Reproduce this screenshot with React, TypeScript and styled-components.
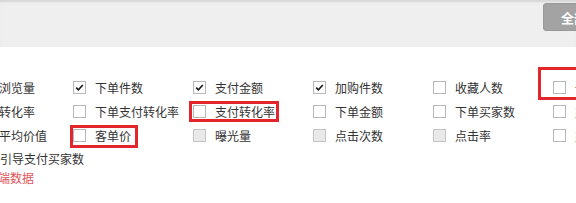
import { Fragment } from 'react';
import styled, { createGlobalStyle, css } from 'styled-components';

const GlobalStyle = createGlobalStyle`
  html, body {
    margin: 0;
    padding: 0;
    background: #fff;
    overflow: hidden;
  }
  body {
    font-family: "Noto Sans CJK SC", "Noto Sans", sans-serif;
    font-size: 12px;
    color: #333;
  }
`;

const Page = styled.div`
  width: 576px;
  height: 203px;
  overflow: hidden;
`;

const TopBar = styled.div`
  height: 47px;
  background: #efefef;
  box-shadow: inset 0 3px 2px -1px #d6d6d6;
  display: flex;
  justify-content: flex-end;
  align-items: flex-start;
`;

const AllButton = styled.button`
  margin: 3px -40px 0 0;
  width: 73px;
  height: 28px;
  padding: 0 0 0 17px;
  border: 1px solid #999;
  border-radius: 3px;
  background: #a3a3a3;
  color: #fff;
  font-family: "Noto Sans CJK SC", sans-serif;
  font-size: 13px;
  font-weight: bold;
  text-align: left;
`;

const Grid = styled.div`
  padding-top: 28px;
  display: grid;
  grid-template-columns: 73px repeat(5, 120px);
  grid-auto-rows: 24px;
`;

const RowLabel = styled.div`
  display: flex;
  align-items: center;
  margin-left: -1px;
  white-space: nowrap;
`;

type Mark = { t: number; r: number; b: number; l: number };

const Item = styled.label<{ $mark?: Mark }>`
  position: relative;
  justify-self: start;
  display: inline-flex;
  align-items: center;
  height: 24px;
  white-space: nowrap;
  ${(p) =>
    p.$mark &&
    css`
      &::after {
        content: '';
        position: absolute;
        top: ${p.$mark.t}px;
        right: ${p.$mark.r}px;
        bottom: ${p.$mark.b}px;
        left: ${p.$mark.l}px;
        border: 3px solid #e2262c;
        pointer-events: none;
      }
    `}
`;

const Box = styled.span<{ $disabled?: boolean }>`
  box-sizing: border-box;
  width: 13px;
  height: 13px;
  margin-right: 9px;
  border: 1px solid ${(p) => (p.$disabled ? '#c4c4c4' : '#b8b8b8')};
  background: ${(p) => (p.$disabled ? '#e9e9e9' : '#fff')};
  display: flex;
  align-items: center;
  justify-content: center;
  flex-shrink: 0;
`;

const Footer = styled.div`
  display: flex;
  flex-direction: column;
`;

const FootLine = styled.div`
  height: 24px;
  line-height: 24px;
  white-space: nowrap;
`;

const RedLink = styled.div`
  margin-left: -2px;
  line-height: 14px;
  color: #e25458;
`;

const Check = () => (
  <svg width="11" height="11" viewBox="0 0 11 11">
    <path d="M2.2 5.6 L4.4 7.8 L8.8 3" fill="none" stroke="#1a1a1a" strokeWidth="1.6" />
  </svg>
);

interface Cell {
  text: string;
  checked?: boolean;
  disabled?: boolean;
  mark?: Mark;
}

const rows: { label: string; cells: Cell[] }[] = [
  {
    label: '浏览量',
    cells: [
      { text: '下单件数', checked: true },
      { text: '支付金额', checked: true },
      { text: '加购件数', checked: true },
      { text: '收藏人数' },
      { text: '一级访客', mark: { t: -8, r: -60, b: -1, l: -15 } },
    ],
  },
  {
    label: '转化率',
    cells: [
      { text: '下单支付转化率' },
      { text: '支付转化率', mark: { t: 2, r: -4, b: 1, l: -4 } },
      { text: '下单金额' },
      { text: '下单买家数' },
      { text: '支付件数' },
    ],
  },
  {
    label: '平均价值',
    cells: [
      { text: '客单价', mark: { t: 2, r: -7, b: -1, l: -3 } },
      { text: '曝光量', disabled: true },
      { text: '点击次数', disabled: true },
      { text: '点击率', disabled: true },
      { text: '支付买家数' },
    ],
  },
];

const App = () => (
  <Page>
    <GlobalStyle />
    <TopBar>
      <AllButton>全部</AllButton>
    </TopBar>
    <Grid>
      {rows.map((row) => (
        <Fragment key={row.label}>
          <RowLabel>{row.label}</RowLabel>
          {row.cells.map((c) => (
            <Item key={c.text} $mark={c.mark}>
              <Box $disabled={c.disabled}>{c.checked && <Check />}</Box>
              {c.text}
            </Item>
          ))}
        </Fragment>
      ))}
    </Grid>
    <Footer>
      <FootLine>引导支付买家数</FootLine>
      <RedLink>端数据</RedLink>
    </Footer>
  </Page>
);

export default App;
